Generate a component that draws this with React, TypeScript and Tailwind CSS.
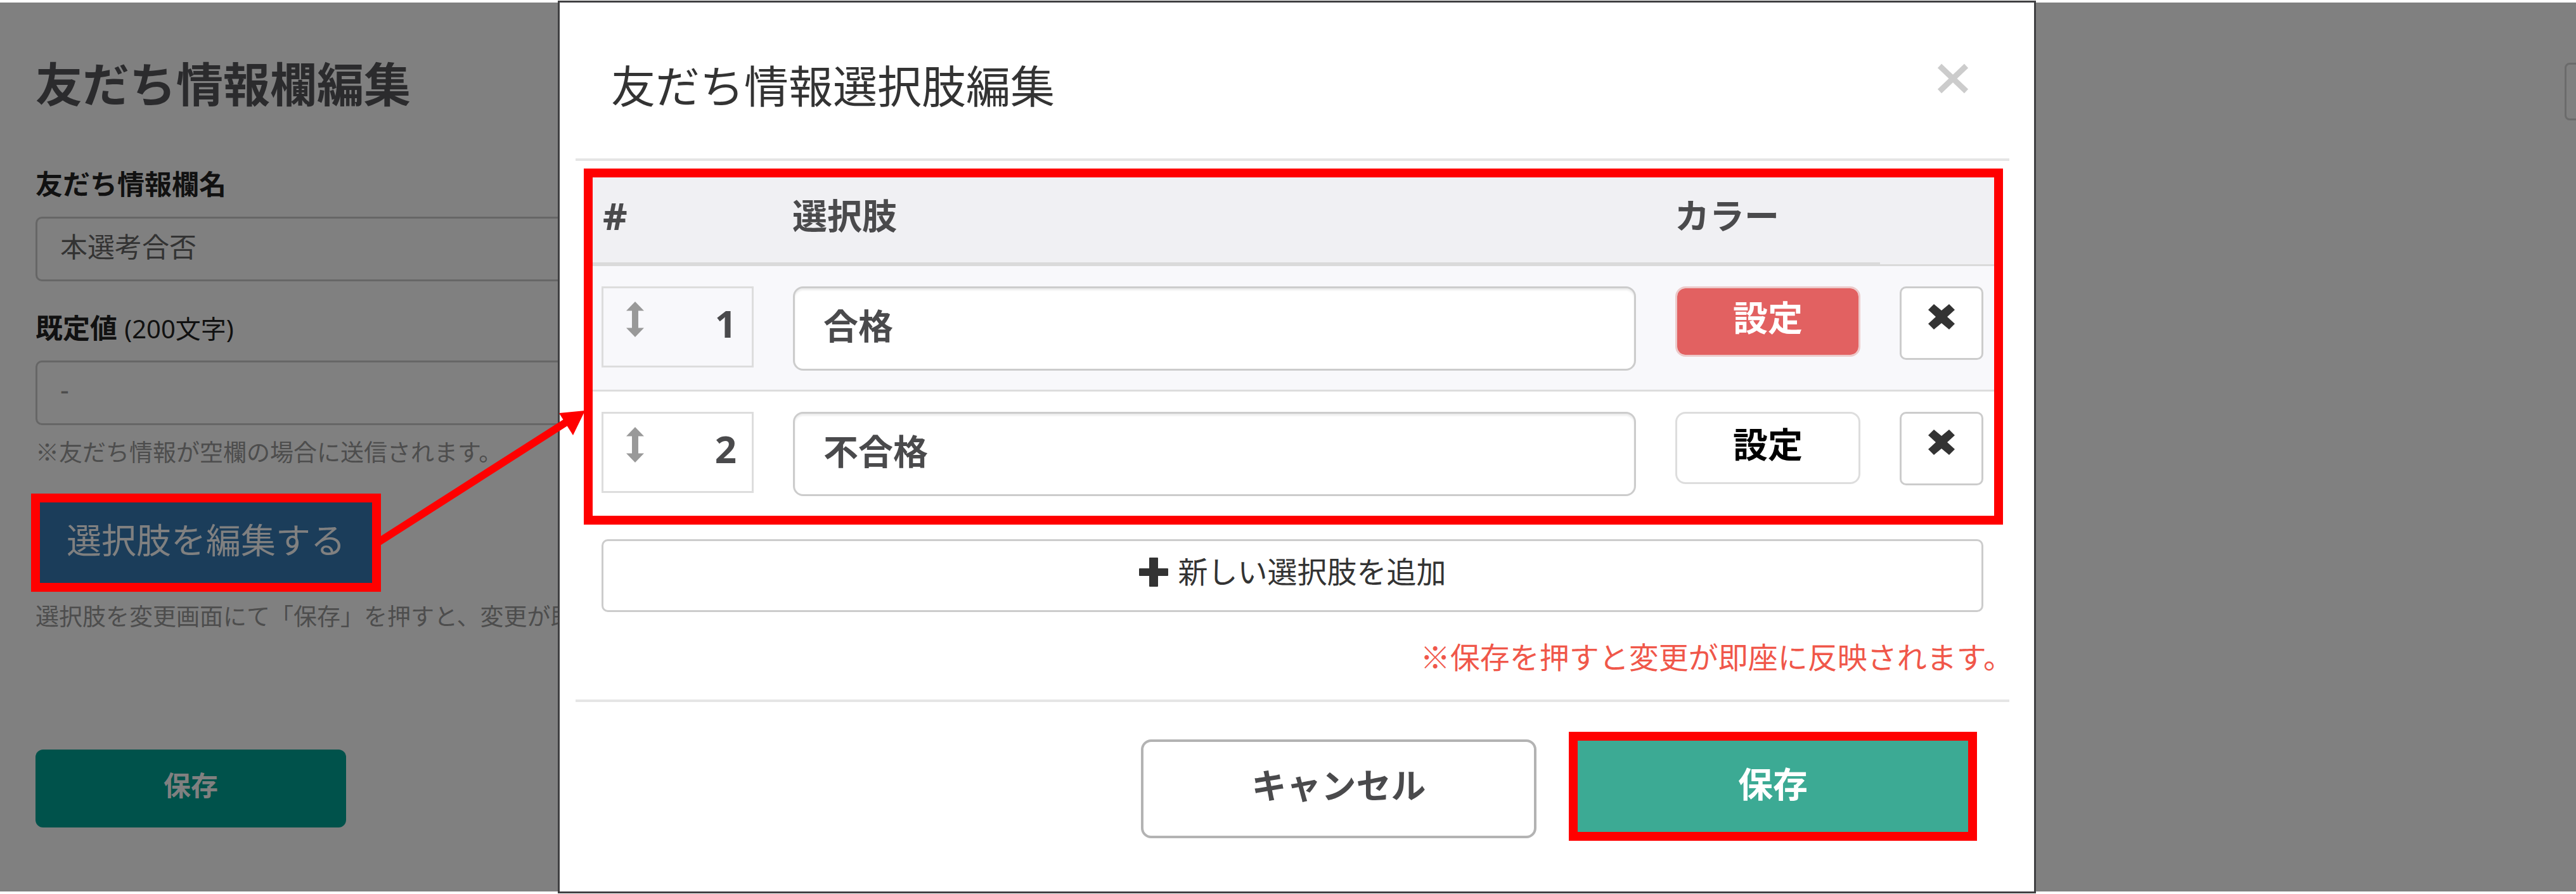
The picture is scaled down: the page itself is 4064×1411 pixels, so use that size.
import React, { useState } from "react";

type Choice = {
  id: number;
  name: string;
  colorClass: string;
};

const initialChoices: Choice[] = [
  {
    id: 1,
    name: "合格",
    colorClass: "h-[111px] border-[#eccaca] bg-[#e26161] bg-clip-padding text-white",
  },
  {
    id: 2,
    name: "不合格",
    colorClass: "h-[114px] border-[#dddddd] bg-white text-black",
  },
];

const MoveIcon = () => (
  <svg width="28" height="56" viewBox="0 0 28 56" fill="#999999">
    <path d="M14 0 28 14.5H19V41.5H28L14 56 0 41.5H9V14.5H0Z" />
  </svg>
);

const RemoveIcon = () => (
  <svg width="42" height="40" viewBox="0 0 42 40" fill="#333333">
    <path d="M9 0 21 10 33 0 42 9 30 20 42 31 33 40 21 30 9 40 0 31 12 20 0 9Z" />
  </svg>
);

const PlusIcon = () => (
  <svg width="46" height="46" viewBox="0 0 46 46" fill="#333333">
    <path d="M17 0H29Q30 0 30 1V17H45Q46 17 46 18V28Q46 29 45 29H30V45Q30 46 29 46H17Q16 46 16 45V29H1Q0 29 0 28V18Q0 17 1 17H16V1Q16 0 17 0Z" />
  </svg>
);

const CloseIcon = () => (
  <svg width="50" height="48" viewBox="0 0 50 48" stroke="#cccccc" strokeWidth="9">
    <path d="M4 4 46 44M46 4 4 44" />
  </svg>
);

const EditForm = () => {
  const [fieldName, setFieldName] = useState("本選考合否");

  return (
    <main className="col-start-1 row-start-1 my-1 min-w-0 overflow-hidden bg-[#808080] pl-14 pt-[85px]">
      <div className="flex items-start justify-between">
        <h1 className="text-[74px] font-bold leading-[88px] text-[#2b2b2d]">
          友だち情報欄編集
        </h1>
        <div className="-mr-20 mt-[10px] h-[91px] w-[98px] shrink-0 rounded-lg border-[3px] border-[#6b6b6b]" />
      </div>
      <label
        htmlFor="field-name"
        className="mt-[77px] block h-12 text-[43px] font-bold leading-[48px] text-[#111111]"
      >
        友だち情報欄名
      </label>
      <input
        id="field-name"
        value={fieldName}
        onChange={(e) => setFieldName(e.target.value)}
        className="mt-[27px] block h-[102px] w-1/2 rounded-[10px] border-[3px] border-[#666666] px-9 pb-3 text-[43px] text-[#333333]"
      />
      <label
        htmlFor="default-value"
        className="mt-[50px] block h-12 text-[43px] font-bold leading-[48px] text-[#111111]"
      >
        既定値 <span className="text-[40px] font-normal">(200文字)</span>
      </label>
      <input
        id="default-value"
        placeholder="-"
        className="mt-[27px] block h-[102px] w-1/2 rounded-[10px] border-[3px] border-[#666666] px-9 pb-3 text-[43px] placeholder:text-[#4d4d4d]"
      />
      <p className="mt-[19px] font-['Noto_Sans_CJK_JP',sans-serif] text-[37px] leading-[44px] text-[#4d4d4d]">
        ※友だち情報が空欄の場合に送信されます。
      </p>
      <button
        type="button"
        className="-ml-[7px] mt-[45px] block h-[155px] w-[552px] border-[14px] border-[#ff0000] bg-[#1b3d5a] pb-2 text-[55px] text-[#808080]"
      >
        選択肢を編集する
      </button>
      <p className="mt-[15px] font-['Noto_Sans_CJK_JP',sans-serif] text-[37px] leading-[44px] text-[#4d4d4d]">
        選択肢を変更画面にて「保存」を押すと、変更が即
      </p>
      <button
        type="button"
        className="mt-[190px] block h-[123px] w-[490px] rounded-xl bg-[#00524b] pb-2 text-[43px] font-bold text-[#808080]"
      >
        保存
      </button>
    </main>
  );
};

const ChoiceDialog = () => {
  const [choices, setChoices] = useState(initialChoices);

  const rename = (id: number, name: string) => {
    setChoices(choices.map((item) => (item.id === id ? { ...item, name } : item)));
  };

  const remove = (id: number) => {
    setChoices(choices.filter((item) => item.id !== id));
  };

  return (
    <section
      role="dialog"
      aria-labelledby="dialog-title"
      className="z-10 col-start-1 row-start-1 my-px ml-[880px] mr-[852px] border-[3px] border-[#404042] bg-white"
    >
      <div className="ml-[25px] mr-[39px] flex items-start justify-between border-b-4 border-[#e5e5e5] pb-[74px] pl-14 pr-16 pt-[92px]">
        <h2 id="dialog-title" className="text-[70px] leading-[80px] text-[#333333]">
          友だち情報選択肢編集
        </h2>
        <button type="button" aria-label="閉じる" className="mt-1">
          <CloseIcon />
        </button>
      </div>

      <div className="ml-[38px] mr-[49px] mt-3">
        <div className="relative pb-3">
          <table className="w-full table-fixed border-separate border-spacing-0 text-left text-[55px] font-bold text-[#4a4a4c]">
            <colgroup>
              <col className="w-[299px]" />
              <col />
              <col className="w-[354px]" />
              <col className="w-[194px]" />
            </colgroup>
            <thead className="bg-[#f0f0f3]">
              <tr className="h-[154px] leading-[60px]">
                <th className="border-b-[6px] border-[#dadada] pl-[30px] text-[60px]">#</th>
                <th className="border-b-[6px] border-[#dadada] pl-[30px]">選択肢</th>
                <th className="border-b-[6px] border-[#dadada] pl-[30px]">カラー</th>
                <th className="border-b-[3px] border-[#dadada]" />
              </tr>
            </thead>
            <tbody>
              {choices.map((item, i) => (
                <tr
                  key={item.id}
                  className="h-[198px] align-top odd:bg-[#f8f8fb] [&>td]:border-b-[3px] [&>td]:border-[#dddddd] [&>td]:pt-8 last:[&>td]:border-transparent"
                >
                  <td className="pl-7 pr-[31px]">
                    <div className="flex h-32 items-start justify-between border-[3px] border-[#dddddd] pl-9 pr-6 pt-[21px]">
                      <MoveIcon />
                      <span className="mt-1 text-[60px] leading-[60px]">{i + 1}</span>
                    </div>
                  </td>
                  <td className="px-[31px]">
                    <input
                      aria-label="選択肢"
                      value={item.name}
                      onChange={(e) => rename(item.id, e.target.value)}
                      className="block h-[133px] w-full rounded-2xl border-[3px] border-[#cccccc] bg-white px-[45px] pb-4 shadow-[inset_0_3px_3px_rgba(0,0,0,0.08)]"
                    />
                  </td>
                  <td className="px-[31px]">
                    <button
                      type="button"
                      className={`block w-full rounded-2xl border-[3px] pb-3 ${item.colorClass}`}
                    >
                      設定
                    </button>
                  </td>
                  <td className="px-[31px]">
                    <button
                      type="button"
                      aria-label="削除"
                      onClick={() => remove(item.id)}
                      className="flex h-[116px] w-full items-center justify-center rounded-[10px] border-[3px] border-[#cccccc] bg-white pb-5"
                    >
                      <RemoveIcon />
                    </button>
                  </td>
                </tr>
              ))}
            </tbody>
          </table>
          <div className="pointer-events-none absolute inset-0 border-[14px] border-[#ff0000]" />
        </div>

        <div className="ml-7 mr-[31px] mt-[23px]">
          <button
            type="button"
            className="flex h-[115px] w-full items-center justify-center gap-4 rounded-[10px] border-[3px] border-[#cccccc] pb-3 text-[47px] text-[#333333]"
          >
            <PlusIcon />
            新しい選択肢を追加
          </button>
        </div>
        <p className="-mr-4 mt-11 text-right font-['Noto_Sans_CJK_JP',sans-serif] text-[47px] leading-[50px] text-[#f0574a]">
          ※保存を押すと変更が即座に反映されます。
        </p>
      </div>

      <div className="ml-[25px] mr-[39px] mt-11 flex items-start justify-end gap-[51px] border-t-4 border-[#e5e5e5] pb-20 pr-[51px] pt-[47px]">
        <button
          type="button"
          className="mt-3 h-[156px] w-[624px] rounded-2xl border-4 border-[#b3b3b3] pb-3 text-[55px] font-bold text-[#4a4a4c]"
        >
          キャンセル
        </button>
        <button
          type="button"
          className="h-[172px] w-[644px] border-[14px] border-[#ff0000] bg-[#3caa94] pb-2 text-[55px] font-bold text-white"
        >
          保存
        </button>
      </div>
    </section>
  );
};

const App = () => {
  return (
    <div className="relative grid grid-cols-1 overflow-hidden bg-white font-['Noto_Sans','Noto_Sans_CJK_JP',sans-serif]">
      <EditForm />
      <ChoiceDialog />
      {/* arrow from the edit button to the choice table */}
      <svg
        className="pointer-events-none absolute left-[590px] top-[640px] z-20"
        width="340"
        height="230"
        viewBox="0 0 340 230"
        fill="#ff0000"
      >
        <path d="M8 215 310 22" stroke="#ff0000" strokeWidth="12" />
        <path d="M333 8 292 12 314 47Z" />
      </svg>
    </div>
  );
};

export default App;
